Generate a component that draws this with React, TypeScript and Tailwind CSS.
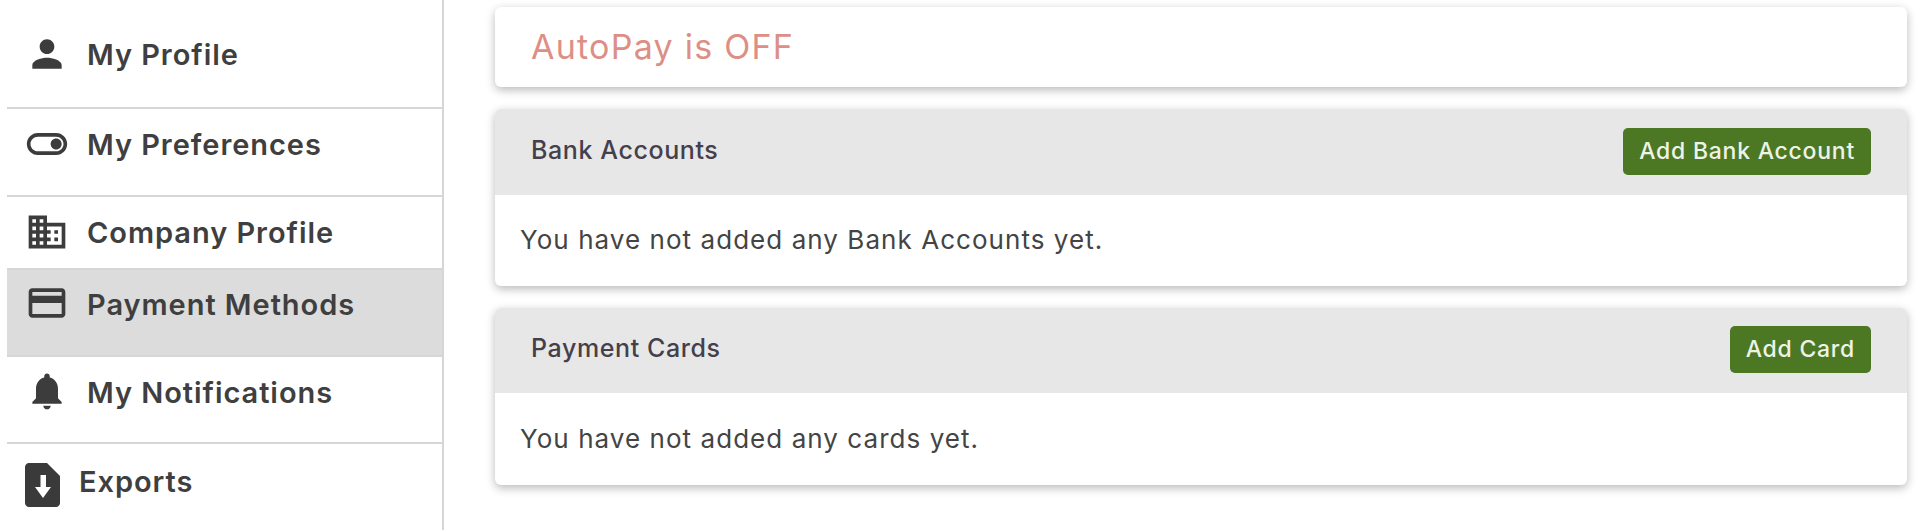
import React from 'react';

const iconPaths = {
  person:
    'M12 12c2.21 0 4-1.79 4-4s-1.79-4-4-4-4 1.79-4 4 1.79 4 4 4zm0 2c-2.67 0-8 1.34-8 4v2h16v-2c0-2.66-5.33-4-8-4z',
  toggle:
    'M17 6H7c-3.31 0-6 2.69-6 6s2.69 6 6 6h10c3.31 0 6-2.69 6-6s-2.69-6-6-6zm0 10H7c-2.21 0-4-1.79-4-4s1.79-4 4-4h10c2.21 0 4 1.79 4 4s-1.79 4-4 4zm0-7c-1.66 0-3 1.34-3 3s1.34 3 3 3 3-1.34 3-3-1.34-3-3-3z',
  domain:
    'M12 7V3H2v18h20V7H12zM6 19H4v-2h2v2zm0-4H4v-2h2v2zm0-4H4V9h2v2zm0-4H4V5h2v2zm4 12H8v-2h2v2zm0-4H8v-2h2v2zm0-4H8V9h2v2zm0-4H8V5h2v2zm10 12h-8v-2h2v-2h-2v-2h2v-2h-2V9h8v10zm-2-8h-2v2h2v-2zm0 4h-2v2h2v-2z',
  card:
    'M20 4H4c-1.11 0-1.99.89-1.99 2L2 18c0 1.11.89 2 2 2h16c1.11 0 2-.89 2-2V6c0-1.11-.89-2-2-2zm0 14H4v-6h16v6zm0-10H4V6h16v2z',
  bell:
    'M12 22c1.1 0 2-.9 2-2h-4c0 1.1.89 2 2 2zm6-6v-5c0-3.07-1.64-5.64-4.5-6.32V4c0-.83-.67-1.5-1.5-1.5s-1.5.67-1.5 1.5v.68C7.63 5.36 6 7.92 6 11v5l-2 2v1h16v-1l-2-2z',
};

function MenuIcon({ path }: { path: string }) {
  return (
    <svg viewBox="0 0 24 24" className="w-[44px] h-[44px] shrink-0 fill-[#3c3c3c]">
      <path d={path} />
    </svg>
  );
}

function ExportIcon() {
  return (
    <svg viewBox="0 0 35 44" className="w-[35px] h-[44px] shrink-0">
      <path
        d="M4 0H22L35 13V40C35 42.2 33.2 44 31 44H4C1.8 44 0 42.2 0 40V4C0 1.8 1.8 0 4 0Z"
        className="fill-[#3a3a3a]"
      />
      <path d="M15.5 12H21V24H26L18 35L10 24H15.5Z" className="fill-white" />
    </svg>
  );
}

function MenuRow({
  label,
  path,
  rowClass,
  active,
}: {
  label: string;
  path: string;
  rowClass: string;
  active?: boolean;
}) {
  return (
    <div
      className={`${rowClass} flex items-center gap-[18px] pl-[18px] border-b-2 border-[#d6d6d6] ${
        active ? 'bg-[#dcdcdc]' : ''
      }`}
    >
      <MenuIcon path={path} />
      <span className="pt-[3px] text-[29px] font-semibold text-[#3f3f3f] tracking-[0.95px]">{label}</span>
    </div>
  );
}

function Section({
  title,
  button,
  empty,
  headerHeight,
  bodyHeight,
}: {
  title: string;
  button: string;
  empty: string;
  headerHeight: string;
  bodyHeight: string;
}) {
  return (
    <section className="rounded-md bg-white shadow-[0_3px_10px_rgba(0,0,0,0.28)] overflow-hidden">
      <div className={`${headerHeight} flex items-center justify-between bg-[#e7e7e7] pl-[36px] pr-[36px]`}>
        <span className="pb-[3px] text-[25px] font-medium text-[#453f4c] tracking-[0.6px]">{title}</span>
        <button className="h-[47px] mb-[2px] rounded-[5px] bg-[#4c7823] px-[16px] text-[23px] font-medium text-[#eef3e8] tracking-[0.75px]">
          {button}
        </button>
      </div>
      <div className={`${bodyHeight} flex items-center pl-[25px] pb-[2px] text-[26px] text-[#444] tracking-[1.05px]`}>
        {empty}
      </div>
    </section>
  );
}

export default function App() {
  return (
    <div className="flex h-[530px] w-[1918px] overflow-hidden bg-white font-['Inter',sans-serif]">
      <aside className="w-[444px] shrink-0 pl-[7px] border-r-2 border-[#d6d6d6]">
        <MenuRow label="My Profile" path={iconPaths.person} rowClass="h-[109px]" />
        <MenuRow label="My Preferences" path={iconPaths.toggle} rowClass="h-[88px] pb-[17px]" />
        <MenuRow label="Company Profile" path={iconPaths.domain} rowClass="h-[73px] pb-[2px]" />
        <MenuRow label="Payment Methods" path={iconPaths.card} rowClass="h-[87px] pb-[19px]" active />
        <MenuRow label="My Notifications" path={iconPaths.bell} rowClass="h-[87px] pb-[17px]" />
        <div className="h-[86px] flex items-center gap-[19px] pl-[18px] pb-[5px]">
          <ExportIcon />
          <span className="pb-[6px] text-[29px] font-semibold text-[#3f3f3f] tracking-[0.95px]">Exports</span>
        </div>
      </aside>
      <main className="flex-1 pl-[51px] pr-[11px] pt-[7px] flex flex-col gap-[22px]">
        <div className="h-[80px] rounded-md bg-white shadow-[0_3px_10px_rgba(0,0,0,0.28)] flex items-center pl-[36px] pb-[2px]">
          <span className="text-[34px] text-[#dd8f86] tracking-[1.25px]">AutoPay is OFF</span>
        </div>
        <Section
          title="Bank Accounts"
          button="Add Bank Account"
          empty="You have not added any Bank Accounts yet."
          headerHeight="h-[86px]"
          bodyHeight="h-[91px]"
        />
        <Section
          title="Payment Cards"
          button="Add Card"
          empty="You have not added any cards yet."
          headerHeight="h-[85px]"
          bodyHeight="h-[92px]"
        />
      </main>
    </div>
  );
}
